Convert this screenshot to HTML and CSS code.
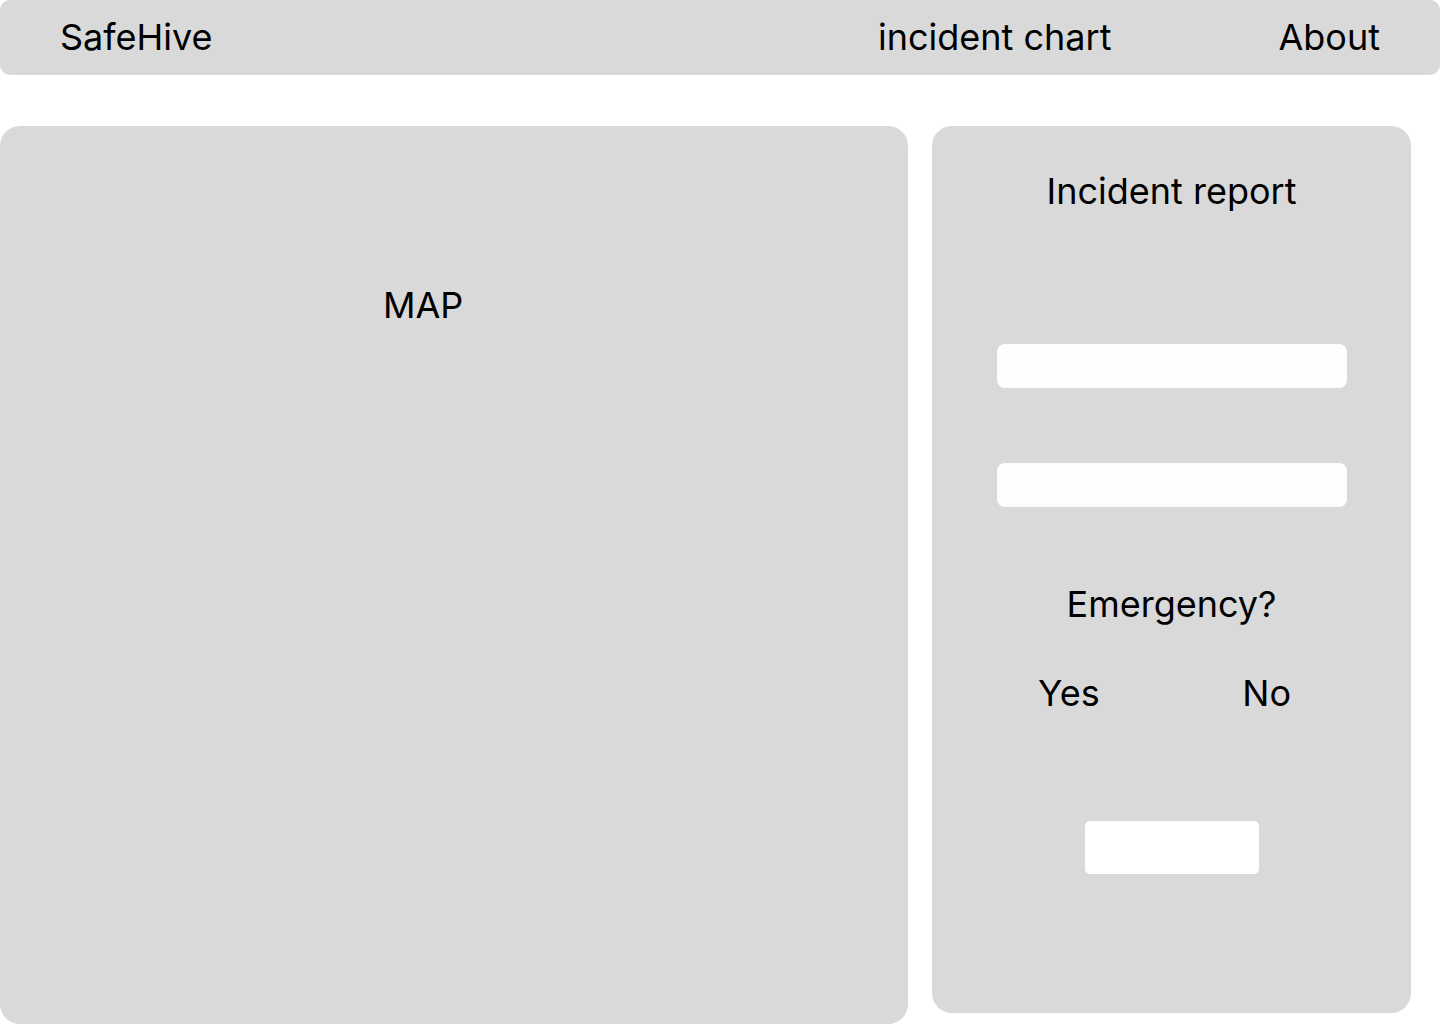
FILE: index.html
```html
<!DOCTYPE html>
<html lang="en">
<head>
<meta charset="utf-8">
<title>SafeHive</title>
<link rel="stylesheet" href="styles.css">
</head>
<body>
<header class="topbar">
  <div class="brand">SafeHive</div>
  <nav class="nav">
    <a class="nav-link" href="#">incident chart</a>
    <a class="nav-link" href="#">About</a>
  </nav>
</header>
<main class="content">
  <section class="map-panel">
    <div class="map-label">MAP</div>
  </section>
  <aside class="report-panel">
    <h1 class="report-title">Incident report</h1>
    <input class="field field-first" type="text" aria-label="Incident">
    <input class="field field-second" type="text" aria-label="Location">
    <div class="question">Emergency?</div>
    <div class="choices">
      <span class="choice">Yes</span>
      <span class="choice">No</span>
    </div>
    <button class="submit" type="button" aria-label="Submit"></button>
  </aside>
</main>
</body>
</html>
```

FILE: styles.css
```css
* { box-sizing: border-box; }
html, body { margin: 0; padding: 0; background: #ffffff; }
body {
  font-family: Inter, "Noto Sans", sans-serif;
  font-size: 36px;
  color: #000000;
  width: 1440px;
  height: 1024px;
  overflow: hidden;
}
.topbar {
  height: 75px;
  background: #d9d9d9;
  border-radius: 10px;
  display: flex;
  align-items: center;
  padding: 0 60px 1px;
  line-height: 44px;
}
.brand { font-weight: 400; }
.nav {
  margin-left: auto;
  display: flex;
  gap: 167px;
}
.nav-link { color: #000; text-decoration: none; }
.content {
  display: flex;
  align-items: flex-start;
  gap: 24px;
  margin-top: 51px;
}
.map-panel {
  width: 908px;
  height: 898px;
  background: #d9d9d9;
  border-radius: 20px;
  padding: 157px 0 0 383px;
  line-height: 44px;
}
.report-panel {
  width: 479px;
  height: 887px;
  background: #d9d9d9;
  border-radius: 20px;
  display: flex;
  flex-direction: column;
  align-items: center;
  padding-top: 43px;
  line-height: 44px;
}
.report-title {
  margin: 0;
  font-size: 36px;
  font-weight: 400;
  line-height: 44px;
}
.field {
  width: 350px;
  height: 44px;
  border: none;
  border-radius: 8px;
  background: #fffdfd;
  outline: none;
  font: inherit;
}
.field-first { margin-top: 131px; }
.field-second { margin-top: 75px; }
.question { margin-top: 75px; }
.choices {
  margin-top: 45px;
  width: 100%;
  display: flex;
  justify-content: space-between;
  padding: 0 120px 0 106px;
}
.submit {
  margin-top: 106px;
  width: 174px;
  height: 53px;
  border: none;
  border-radius: 5px;
  background: #ffffff;
  padding: 0;
}
```
